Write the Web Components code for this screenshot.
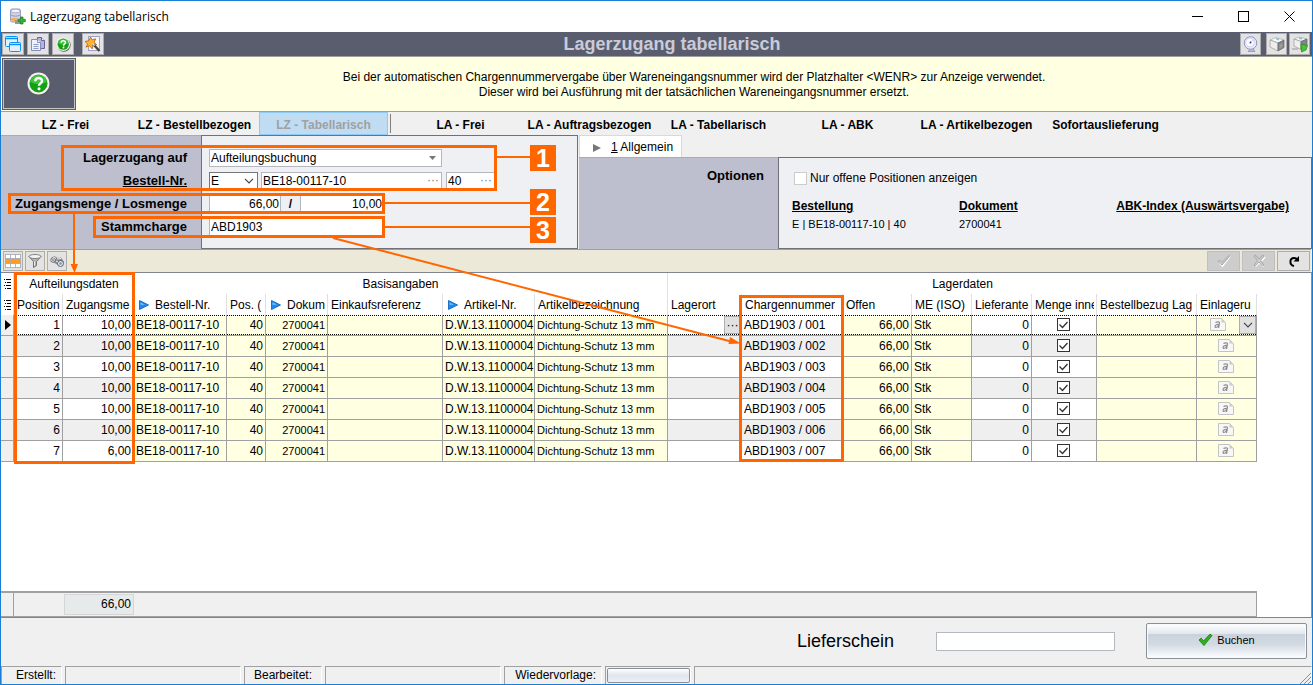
<!DOCTYPE html>
<html lang="de">
<head>
<meta charset="utf-8">
<title>Lagerzugang tabellarisch</title>
<style>
  html, body { margin: 0; background: #f0f0f0; }
  body { font: 12px/15px "Liberation Sans", Arial, sans-serif; color: #000; position: relative; }
</style>
</head>
<body>
<app-window></app-window>
<callout-layer></callout-layer>

<script>
const ICON = {
  app: `<svg width="17" height="17" viewBox="0 0 17 17"><rect x="1.5" y="1" width="10" height="13" rx="1.5" fill="#cfd3ea" stroke="#9a9fc0"/><ellipse cx="6.500" cy="3" rx="4.500" ry="1.800" fill="#f4f5fc" stroke="#9a9fc0" stroke-width=".7"/><path d="M2 7c2 1.600 7 1.600 9 0M2 11c2 1.600 7 1.600 9 0" fill="none" stroke="#8589b5" stroke-width=".8"/><rect x="3" y="10" width="6" height="3" fill="#f0b060"/><rect x="6" y="12" width="6" height="4" fill="#999"/><path d="M11.500 9h2.500v2.300h2.300v2.400H14V16h-2.500v-2.300H9.200v-2.400h2.300z" fill="#35b332" stroke="#167a18" stroke-width=".7"/></svg>`,
  windows: `<svg width="18" height="18" viewBox="0 0 18 18"><rect x="1.500" y="1.500" width="12" height="10" rx="1" fill="#dff1ff" stroke="#0a94f5"/><path d="M1.500 3.500h12" stroke="#0a94f5" stroke-width="1.500"/><rect x="5.500" y="7.500" width="11" height="9" rx="1" fill="#e6eefc" stroke="#0a94f5"/><path d="M5.500 9.500h11" stroke="#0a94f5" stroke-width="1.500"/></svg>`,
  copy: `<svg width="18" height="18" viewBox="0 0 18 18"><path d="M8.500 2.500h4l3 3v8h-7z" fill="#b7b2dc" stroke="#6a65a0"/><path d="M12.500 2.500v3h3" fill="#fff" stroke="#6a65a0"/><path d="M2.500 4.500h6l3 3v8h-9z" fill="#eef1fa" stroke="#8a8db8"/><path d="M8.500 4.500v3h3" fill="#fff" stroke="#8a8db8"/><path d="M4.500 9.500h5M4.500 11.500h5M4.500 13.500h5" stroke="#8a9cc8"/></svg>`,
  help: `<svg width="15" height="15" viewBox="0 0 24 24"><circle cx="12.500" cy="12.500" r="11" fill="#555"/><circle cx="11.500" cy="11.500" r="11" fill="#f2f2f2"/><circle cx="11.500" cy="11.500" r="9" fill="#16a016"/><path d="M3.500 10a8 7 0 0 1 16 0 12 8 0 0 1-16 0z" fill="#3fc53a"/><path d="M8.300 9.200c0-4.200 6.700-4.200 6.700-.3 0 2.400-3 2.400-3 4.900" fill="none" stroke="#fff" stroke-width="2.400"/><circle cx="12" cy="16.800" r="1.500" fill="#fff"/></svg>`,
  wizard: `<svg width="18" height="18" viewBox="0 0 18 18"><rect x="4.500" y="1.500" width="11" height="14" fill="#f5f7ff" stroke="#9aa3c8"/><path d="M6.500 2l1.600 2.800 3.600-1-1.500 3.400 2.400 2.600-3.600.2-.8 3.800-2.600-3-3.600 1.300L3.600 9 1 6.500l3.900-.8z" fill="#ffb52e" stroke="#c8660a" stroke-width=".9"/><path d="M9 9l6.500 7" stroke="#444" stroke-width="2.400"/><path d="M8.500 8.500l2 2" stroke="#eee" stroke-width="1.500"/></svg>`,
  dish: `<svg width="18" height="18" viewBox="0 0 18 18"><path d="M6 16.500h7l-3-4z" fill="#b9bce0" stroke="#8d91bd" stroke-width=".8"/><circle cx="8.500" cy="8" r="6.300" fill="#e9ebfa" stroke="#8f94c6"/><circle cx="8" cy="7.500" r="4.300" fill="#fafbff" stroke="#c3c7e6" stroke-width=".7"/><path d="M8 7.500l4-3" stroke="#c3c7e6" stroke-width=".8"/><circle cx="8.500" cy="7.500" r=".9" fill="#30356a"/></svg>`,
  cube: `<svg width="18" height="18" viewBox="0 0 18 18"><path d="M2 5l6-2.500L16 5l-6 3z" fill="#fafafa" stroke="#aaa" stroke-width=".7"/><path d="M2 5l8 3v8l-8-4z" fill="#ededed" stroke="#999" stroke-width=".7"/><path d="M10 8l6-3v7.500L10 16z" fill="#858585" stroke="#666" stroke-width=".7"/><path d="M8 3.500l3 1.200" stroke="#7fc4d8" stroke-width="1.500"/><path d="M11.500 9.500l3-1.500v4l-3 1.500z" fill="#9b9b9b"/></svg>`,
  cubeGo: `<svg width="18" height="18" viewBox="0 0 18 18"><path d="M3 4l5-2 8 2-6 2.500z" fill="#fafafa" stroke="#aaa" stroke-width=".7"/><path d="M3 4l7 2.500v8L3 11z" fill="#efefef" stroke="#999" stroke-width=".7"/><path d="M10 6.500L16 4v7l-6 3.500z" fill="#858585" stroke="#666" stroke-width=".7"/><path d="M8 3l3 1" stroke="#7fc4d8" stroke-width="1.500"/><path d="M1 14h6" stroke="#999"/><path d="M10 9l6.500 1.500L15 15l-4.500 2z" fill="#48c234" stroke="#1f8a1a" stroke-width=".7"/></svg>`,
  columns: `<svg width="18" height="18" viewBox="0 0 18 18"><rect x="1" y="2" width="16" height="14" fill="#fff"/><rect x="1" y="6.500" width="16" height="5" fill="#ff9d1e"/><path d="M1 2.500h16M1 6.500h16M1 11.500h16M1 15.500h16M1.500 2v14M6.500 2v14M11.500 2v14M16.500 2v14" stroke="#a9abb8" stroke-width=".9" fill="none"/></svg>`,
  funnel: `<svg width="18" height="18" viewBox="0 0 18 18"><path d="M3 4.500l4.500 5V15.500l3-2v-4l4.500-5z" fill="#b4b4b4" stroke="#666" stroke-width=".9"/><ellipse cx="9" cy="4.500" rx="6" ry="2" fill="#f4f4f4" stroke="#777" stroke-width=".9"/><path d="M8.500 9.500v4" stroke="#eee"/></svg>`,
  binoculars: `<svg width="18" height="18" viewBox="0 0 18 18"><path d="M3 6.500l3-2.500 4 2 3-.5 3 4.500-3 4-4-1.500-5-3z" fill="#8b8b8b"/><circle cx="5" cy="8" r="2.300" fill="#dfe6ef" stroke="#666" stroke-width=".9"/><circle cx="12.500" cy="11.500" r="3" fill="#dfe6ef" stroke="#555" stroke-width=".9"/><circle cx="5" cy="8" r="1" fill="#7a93b5"/><circle cx="12.500" cy="11.500" r="1.300" fill="#7a93b5"/><path d="M5 5l3 1.500M9 7l4-.5M8 9l2 1" stroke="#eee"/></svg>`,
  checkOff: `<svg width="16" height="16" viewBox="0 0 16 16"><path d="M3 9.500L6.500 13l7.500-9.500" fill="none" stroke="#fff" stroke-width="1.500"/><path d="M2 8.500l1.500-1.500L6 9.500l7-7 .5 1L6 12z" fill="#d0d0d0" stroke="#9c9c9c" stroke-width=".8"/></svg>`,
  crossOff: `<svg width="16" height="16" viewBox="0 0 16 16"><path d="M4.500 13.500l4-4 4 4M10.500 8l3.500-4" fill="none" stroke="#fff" stroke-width="1.500"/><path d="M3 3l1.500-.8L8 6l3.500-3.800L13 3 9.500 7.500 13 12l-1.500.8L8 9l-3.500 3.800L3 12l3.500-4.500z" fill="#d0d0d0" stroke="#9c9c9c" stroke-width=".8"/></svg>`,
  redo: `<svg width="16" height="16" viewBox="0 0 16 16"><path d="M8 13C3 12 3.500 5 8 5c2 0 3 1 3.500 2.500" fill="none" stroke="#000" stroke-width="2"/><path d="M7.500 8.500H13V3z" fill="#000"/></svg>`,
  greenCheck: `<svg width="15" height="14" viewBox="0 0 15 14"><path d="M1 7l2.200-1.800L5.500 8 12 1.200 14 2.500 6 12.500z" fill="#2fb31d" stroke="#1a7d10" stroke-width=".9"/></svg>`,
  play: `<svg width="10" height="10" viewBox="0 0 10 10"><path d="M.5.500L9.500 5l-9 4.500z" fill="#1a8cf0" stroke="#1467c0" stroke-width=".9"/><path d="M1.500 2.500L6 4.700H1.500z" fill="#7cc4ff"/></svg>`,
  list: `<svg width="7" height="10" viewBox="0 0 7 10"><path d="M0 .5h1M2 .5h5M1 3.500h1M3 3.500h4M0 6.500h1M2 6.500h5M1 9.500h1M3 9.500h4" stroke="#000"/></svg>`,
  note: `<svg width="16" height="13" viewBox="0 0 16 13"><path d="M.5.500h11l4 4v8H.5z" fill="#f7f7f7" stroke="#c4c4c4"/><path d="M11.500.500v4h4z" fill="#ccc"/><path d="M5.500 4.500c1.500-1 4.500-1 4 .5l-1 5M9 6.500C4.500 6 4.500 9.500 6 9.500S8.500 8 8.800 7" fill="none" stroke="#8e8e8e" stroke-width="1.200"/></svg>`,
  chevron: `<svg width="10" height="6" viewBox="0 0 10 6"><path d="M1 .8l4 4 4-4" fill="none" stroke="#444" stroke-width="1.200"/></svg>`
};
const BASE = `:host,*{box-sizing:border-box} svg{display:block;flex:none} button,input,select{font:inherit;color:inherit;margin:0;border-radius:0}
  button{padding:0} :focus-visible{outline:1px dotted #333}`;

function define(name, css, html) {
  customElements.define(name, class extends HTMLElement {
    constructor() {
      super();
      this.attachShadow({ mode: "open" }).innerHTML =
        `<style>${BASE}${css}</style>${typeof html === "function" ? html(this) : html}`;
    }
  });
}

/* small square button of the tool rows; the icon is slotted */
define("icon-button", `
  :host{display:block}
  button{display:flex;align-items:center;justify-content:center;width:var(--w,22px);height:var(--h,22px);
    background:#e3e3e3;border:1px solid #adadad}
  :host([off]) button{background:#cdcdcd;border-color:#bfbfbf}`,
  el => `<button type="button" aria-label="${el.getAttribute("label")}"><slot></slot></button>`);
const ib = (icon, label, extra = "") => `<icon-button label="${label}" ${extra}>${ICON[icon]}</icon-button>`;

define("title-bar", `
  :host{display:flex;align-items:center;height:31px;background:#fff;padding-left:8px;
    font:12px/16px "Open Sans","Noto Sans",sans-serif}
  h1{font:inherit;margin:0 auto 0 4px}
  button{width:46px;height:29px;border:0;background:none;display:grid;place-items:center}`,
  `${ICON.app}<h1>Lagerzugang tabellarisch</h1>
   <button aria-label="Minimieren"><svg width="11" height="11"><path d="M0 5.500h11" stroke="#000"/></svg></button>
   <button aria-label="Maximieren"><svg width="11" height="11"><rect x=".5" y=".5" width="10" height="10" fill="none" stroke="#000"/></svg></button>
   <button aria-label="Schließen"><svg width="11" height="11"><path d="M.5.500l10 10M10.500.500l-10 10" stroke="#000" fill="none"/></svg></button>`);

define("main-toolbar", `
  :host{display:flex;align-items:center;gap:2px;height:25px;padding:0 2px 0 1px;background:#5a5d6e;border-bottom:1px solid #a0a0a0}
  h2{flex:1;margin:0;text-align:center;font-size:18px;line-height:22px;color:#c9cbd9}
  div{display:flex;gap:3px}
  .r{gap:2px;--w:21px}
  .gap{margin-left:5px}.g2{margin-left:3px}`,
  `<div>${ib("windows", "Fenster")}${ib("copy", "Kopieren")}${ib("help", "Hilfe")}${ib("wizard", "Assistent", 'class="gap"')}</div>
   <h2>Lagerzugang tabellarisch</h2>
   <div class="r">${ib("dish", "Überwachung")}${ib("cube", "Lager", 'class="g2"')}${ib("cubeGo", "Lager buchen")}</div>`);

define("info-banner", `
  :host{display:flex;height:55px;background:#ffffe1;border-bottom:1px solid #a0a0a0;padding:1px 0 1px 1px}
  button{width:74px;background:#5a5d6e;border:1px solid #5a5d6e;outline:1px solid #c4c5cc;outline-offset:-2px;display:grid;place-items:center}
  button svg{width:24px;height:24px}
  p{flex:1;margin:0;padding-top:2px;align-self:center;text-align:center}`,
  `<button aria-label="Hilfe">${ICON.help}</button><p><slot></slot></p>`);

define("mode-tabs", `
  :host{display:flex;height:23px;background:#f0f0f0;font-weight:bold}
  button{width:129px;border:1px solid transparent;background:none;white-space:nowrap;padding-top:3px}
  button.on{background:#c0dcf3;border-color:#90c8f6;color:#a0a0a0}
  i{width:1px;margin:2px 5px 2px 2px;background:#808080}
  nav{display:flex}`,
  `<nav><button>LZ - Frei</button><button>LZ - Bestellbezogen</button><button class="on">LZ - Tabellarisch</button><i></i>
   <button>LA - Frei</button><button>LA - Auftragsbezogen</button><button>LA - Tabellarisch</button><button>LA - ABK</button><button>LA - Artikelbezogen</button><button>Sofortauslieferung</button></nav>`);

define("entry-form", `
  :host{display:block;width:577px;flex:none}
  form{display:grid;grid-template-columns:200px 1fr;height:100%}
  .labels,.fields{display:grid;grid-template-rows:repeat(4,18px);row-gap:5px;padding-top:13px;align-content:start}
  .labels{background:#bdbfcf;font-weight:bold;font-size:13px;line-height:18px;text-align:right;padding-right:14px;border-top:1px solid #a9abbb;white-space:nowrap}
  .fields{background:#eff0f3;border:1px solid #6f7078;padding-left:7px}
  .row{display:flex;align-items:stretch}
  input,.sel select{border:1px solid #b4b6c0;background:#fff;padding:0 1px;height:18px;line-height:16px}
  input{width:100%}
  .sel,.pick{position:relative;display:block}
  .sel select{appearance:none;width:100%;display:block}
  .sel svg,.pick button{position:absolute;right:4px;top:6px;pointer-events:none}
  .pick button{border:0;background:none;top:0;height:16px;line-height:12px;color:#777;right:3px}
  .num input{text-align:right}
  .e select{border-color:#777}
  u{text-underline-offset:1px}`,
  `<form>
    <div class="labels"><label for="a">Lagerzugang auf</label><label for="b"><u>Bestell-Nr.</u></label><label for="c">Zugangsmenge / Losmenge</label><label for="d">Stammcharge</label></div>
    <div class="fields">
      <div class="row"><span class="sel" style="width:233px"><select id="a"><option>Aufteilungsbuchung</option></select><svg width="7" height="4" style="right:6px;top:7px"><path d="M0 0h7L3.500 4z" fill="#777"/></svg></span></div>
      <div class="row"><span class="sel e" style="width:49px"><select id="b"><option>E</option></select>${ICON.chevron}</span>
        <span class="pick" style="width:181px;margin-left:3px"><input aria-label="Bestellnummer" value="BE18-00117-10"><button type="button" aria-label="Bestellung suchen">···</button></span>
        <span class="pick" style="width:49px;margin-left:4px"><input aria-label="Position" value="40"><button type="button" aria-label="Position suchen">···</button></span></div>
      <div class="row num"><input id="c" value="66,00" style="width:72px"><b style="width:19px;text-align:center;line-height:18px">/</b><input aria-label="Losmenge" value="10,00" style="width:84px"></div>
      <div class="row"><input id="d" value="ABD1903" style="width:175px"></div>
    </div></form>`);

define("options-panel", `
  :host{display:flex;flex-direction:column;flex:1;min-width:700px;margin-left:1px}
  .tab{display:flex;align-items:center;gap:10px;align-self:flex-start;height:22px;width:103px;padding:2px 0 0 13px;background:#fff;border:1px solid #d9d9d9;border-bottom:0;white-space:nowrap}
  .body{flex:1;display:grid;grid-template-columns:199px 1fr}
  h3{margin:0;background:#bdbfcf;font-size:13px;line-height:17px;text-align:right;padding:9px 14px 0 0;border-top:1px solid #a9abbb}
  .box{background:#eff0f3;border:1px solid #6f7078;padding:12px 22px 0 13px}
  label{display:flex;align-items:center;gap:3px;height:16px;margin-left:2px}
  input{appearance:none;width:13px;height:13px;background:#fff;border:1px solid #ccc}
  dl{display:grid;grid-template-columns:167px 1fr auto;margin:11px 0 0;line-height:18px}
  dt{font-weight:bold}dt a{color:inherit}dd{margin:0;font-size:11px}`,
  `<button class="tab"><svg width="8" height="8"><path d="M0 0l8 4-8 4z" fill="#777"/></svg><span><u>1</u> Allgemein</span></button>
   <div class="body"><h3>Optionen</h3><div class="box">
     <label><input type="checkbox">Nur offene Positionen anzeigen</label>
     <dl><div><dt><a href="#">Bestellung</a></dt><dd>E | BE18-00117-10 | 40</dd></div><div><dt><a href="#">Dokument</a></dt><dd>2700041</dd></div><div><dt><a href="#">ABK-Index (Auswärtsvergabe)</a></dt></div></dl>
   </div></div>`);

define("grid-toolbar", `
  :host{display:flex;align-items:center;gap:2px;height:23px;padding:0 1px 0 2px;background:#ece9d8;border-top:1px solid #a0a0a0;margin-right:1px;--w:20px;--h:20px}
  .r{display:flex;gap:2px;margin-left:auto;--w:33px}`,
  `${ib("columns", "Spalten")}${ib("funnel", "Filter")}${ib("binoculars", "Suchen")}
   <span class="r">${ib("checkOff", "Übernehmen", "off")}${ib("crossOff", "Verwerfen", "off")}${ib("redo", "Aktualisieren")}</span>`);

/* caption, width, has a jump marker */
const COLS = [
  ["", 13], ["Position", 49], ["Zugangsme", 71], ["Bestell-Nr.", 93, 1], ["Pos. (", 39], ["Dokum", 62, 1],
  ["Einkaufsreferenz", 115], ["Artikel-Nr.", 92, 1], ["Artikelbezeichnung", 133], ["Lagerort", 74], ["Chargennummer", 101],
  ["Offen", 69], ["ME (ISO)", 60], ["Lieferante", 60], ["Menge inne", 65], ["Bestellbezug Lag", 100], ["Einlageru", 60]];

function gridRow(i) {
  const first = i === 1;
  const box = `<input type="checkbox" checked aria-label="Menge in Zeile ${i}">`;
  return `<tr class="${first ? "cur" : i % 2 ? "" : "alt"}"><th class="s">${first ? '<svg width="6" height="10"><path d="M0 0l6 5-6 5z"/></svg>' : ""}</th>
  <td class="n">${i}</td><td class="n">${i === 7 ? "6,00" : "10,00"}</td><td class="y">BE18-00117-10</td><td class="y n">40</td><td class="y n sm">2700041</td>
  <td class="y"></td><td class="y">D.W.13.1100004</td><td class="y sm">Dichtung-Schutz 13 mm</td>
  <td class="act">${first ? '<button aria-label="Lagerort suchen">···</button>' : ""}</td><td>ABD1903 / 00${i}</td><td class="y n">66,00</td><td class="y">Stk</td>
  <td class="n">0</td><td class="c">${box}</td><td class="y"></td><td class="y act c"><span class="note">${ICON.note}</span>${first ? `<button aria-label="Einlagerung wählen">${ICON.chevron}</button>` : ""}</td></tr>`;
}

define("stock-grid", `
  :host{display:flex;flex-direction:column;flex:1;background:#fff;border-top:1px solid #808590;border-right:1px solid #909090;border-bottom:1px solid #808590;overflow:hidden}
  table{table-layout:fixed;border-collapse:separate;border-spacing:0;width:1256px}
  td,th{height:21px;padding:0 3px;line-height:18px;font-weight:normal;text-align:left;white-space:nowrap;overflow:hidden}
  thead .g th{text-align:center}
  thead .g th.line{border-right:1px solid #e0e0e0}
  thead .h th{border-right:1px solid #e0e0e0;padding:0 2px 0 3px}
  .h div{display:flex;align-items:center;overflow:hidden}
  .h svg{margin:0 6px 0 2px}
  thead tr th.s{padding:0 0 0 3px;border-right:1px solid #e0e0e0}
  thead tr th.s svg{margin:0}
  tbody td,tbody th{border-right:1px solid #a0a0a0;border-bottom:1px solid #a0a0a0}
  tbody td{padding:0 2px}
  tbody th.s{padding:0 0 0 4px;background:#f0f0f0}
  .alt td{background-color:#efefef}
  tbody td.y{background-color:#ffffe1}
  td.n{text-align:right}
  tbody td.c{padding:0 3px 2px 2px}
  td.sm{font-size:11px}
  .cur td{background-image:repeating-linear-gradient(90deg,#000 0 1px,transparent 1px 2px),repeating-linear-gradient(90deg,#000 0 1px,transparent 1px 2px);
    background-size:100% 1px;background-repeat:no-repeat;background-position:0 0,0 100%}
  input{appearance:none;display:block;width:13px;height:13px;margin:0 auto;border:1px solid #333;background:#fff url('data:image/svg+xml,<svg xmlns="http://www.w3.org/2000/svg" width="11" height="11"><path d="M1.500 5.500l3 3 5-5.500" fill="none" stroke="%23333" stroke-width="1.300"/></svg>')}
  .act{position:relative}
  .act button{position:absolute;right:0;top:1px;width:17px;height:18px;background:#e1e1e1;border:1px solid #adadad;display:grid;place-items:center;line-height:8px}
  .note{display:grid;justify-content:center}
  .cur .note{padding-right:16px}
  .sum{margin-top:auto;display:flex;width:1256px;height:26px;border-top:2px solid #a0a0a0;border-right:1px solid #a0a0a0;border-bottom:1px solid #a0a0a0;background:#f0f0f0}
  .sum i{width:13px;border-right:1px solid #a0a0a0}
  .sum output{display:block;margin:1px 0 1px 50px;width:70px;padding:0 2px;border:1px solid #d6d6d6;background:#e6eaea;text-align:right;line-height:19px}`,
  `<table><colgroup>${COLS.map(c => `<col style="width:${c[1]}px">`).join("")}</colgroup>
   <thead><tr class="g"><th class="s">${ICON.list}</th><th colspan="2">Aufteilungsdaten</th><th colspan="6" class="line">Basisangaben</th><th colspan="8">Lagerdaten</th></tr>
   <tr class="h"><th class="s">${ICON.list}</th>${COLS.slice(1).map(c => `<th><div>${c[2] ? ICON.play : ""}${c[0]}</div></th>`).join("")}</tr></thead>
   <tbody>${[1, 2, 3, 4, 5, 6, 7].map(gridRow).join("")}</tbody></table>
   <div class="sum"><i></i><output>66,00</output></div>`);

define("booking-bar", `
  :host{display:flex;align-items:center;justify-content:flex-end;height:48px;padding:0 5px 2px 0;background:#f0f0f0}
  label{font-size:18px;line-height:20px}
  input{width:179px;height:19px;border:1px solid #b4b8c0;background:#fff;margin:0 31px 0 42px;padding:0 3px}
  button{display:flex;align-items:center;justify-content:center;gap:4px;width:161px;height:36px;padding-bottom:2px;font-size:11px;border:1px solid #8a9099;border-radius:2px;
    box-shadow:inset 0 0 0 1px #f8fafc;background:linear-gradient(#fff 0,#e3e8ee 28%,#c9d2dc 29%,#d3dae2 60%,#f2f5f9 90%,#fff)}`,
  `<label for="ls">Lieferschein</label><input id="ls"><button>${ICON.greenCheck}Buchen</button>`);

define("status-bar", `
  :host{display:flex;gap:3px;height:18px;background:#f0f0f0}
  span{border:1px solid #a0a0a0;border-right-color:#fff;border-bottom:0;padding-right:5px;text-align:right;line-height:17px;flex:none}
  span:first-child{border-left:0}
  span:last-child{flex:1;display:flex;justify-content:flex-end;align-items:flex-end;padding:0}
  button{display:block;width:83px;height:15px;margin:1px 0;border:1px solid #8a9099;border-radius:2px;background:linear-gradient(#fff,#dfe5ec 50%,#eef2f7)}`,
  `<span style="width:61px">Erstellt:</span><span style="width:176px"></span><span style="width:78px;padding-right:9px">Bearbeitet:</span><span style="width:176px"></span>
   <span style="width:98px">Wiedervorlage:</span><span style="width:86px;padding-left:1px"><button aria-label="Wiedervorlage"></button></span>
   <span><svg width="12" height="12"><path d="M1 12L12 1M5 12l7-7M9 12l3-3" stroke="#909090"/></svg></span>`);

define("app-window", `
  :host{display:flex;flex-direction:column;min-height:100vh;border:1px solid #1a7fd4;background:#f0f0f0}
  .top{display:flex;height:114px}`,
  `<title-bar></title-bar><main-toolbar></main-toolbar>
   <info-banner>Bei der automatischen Chargennummervergabe über Wareneingangsnummer wird der Platzhalter &lt;WENR&gt; zur Anzeige verwendet.<br>Dieser wird bei Ausführung mit der tatsächlichen Wareneingangsnummer ersetzt.</info-banner>
   <mode-tabs></mode-tabs><div class="top"><entry-form></entry-form><options-panel></options-panel></div>
   <grid-toolbar></grid-toolbar><stock-grid></stock-grid><booking-bar></booking-bar><status-bar></status-bar>`);

/* numbered callouts drawn over the form and the grid */
define("callout-layer", `
  :host{position:absolute;left:0;top:0;pointer-events:none;color:#ff6600}
  text{font:bold 25px "Liberation Sans",Arial,sans-serif;fill:#fff;text-anchor:middle}`,
  `<svg width="850" height="470"><g fill="none" stroke="currentColor" stroke-width="3">
    <rect x="62.500" y="146.500" width="433" height="43"/><rect x="9.500" y="194.500" width="374" height="18"/><rect x="94.500" y="217.500" width="289" height="19"/>
    <rect x="15.500" y="273.500" width="118" height="189"/><rect x="740.500" y="296.500" width="102" height="164"/></g>
    <path d="M497 157h33M385 203h145M385 227h145M74 214v54M333 238l400 104" fill="none" stroke="currentColor" stroke-width="2"/>
    <path d="M70.500 264h7.500l-3.500 9zM730 337l11 6.500-12.500 .5z" fill="currentColor"/>
    <path d="M530 145h26v26h-26zM530 189h26v26h-26zM530 217h26v26h-26z" fill="currentColor"/>
    <text x="543" y="167">1</text><text x="543" y="211">2</text><text x="543" y="239">3</text></svg>`);
</script>
</body>
</html>
